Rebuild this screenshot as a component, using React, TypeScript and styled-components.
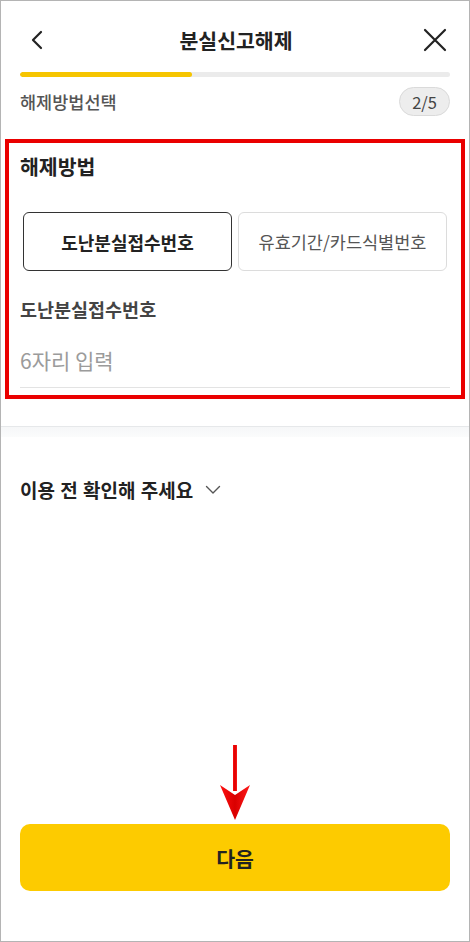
import styled, { createGlobalStyle } from "styled-components";

const GlobalStyle = createGlobalStyle`
    * { box-sizing: border-box; }
    body {
        margin: 0;
        background: #ffffff;
        font-family: "Noto Sans CJK KR", "Noto Sans", sans-serif;
        color: #222;
    }
`;

const Page = styled.div`
    width: 470px;
    height: 942px;
    border: 1px solid #b4b4b4;
    background: #fff;
    display: flex;
    flex-direction: column;
`;

const Header = styled.header`
    display: flex;
    align-items: center;
    justify-content: space-between;
    height: 56px;
    margin-top: 11px;
    padding: 0 22px 0 24px;
`;

const IconButton = styled.button`
    width: 24px;
    height: 24px;
    padding: 0;
    border: none;
    background: none;
    display: flex;
    align-items: center;
    justify-content: center;
`;

const Title = styled.h1`
    margin: 0;
    font-size: 20.5px;
    font-weight: 700;
    color: #222;
`;

const Progress = styled.div`
    margin: 4px 19px 0;
    height: 5px;
    border-radius: 3px;
    background: #ebebeb;
    overflow: hidden;
`;

const ProgressFill = styled.div`
    height: 100%;
    border-radius: 3px;
    background: #f6c500;
`;

const StepRow = styled.div`
    display: flex;
    align-items: center;
    justify-content: space-between;
    margin: 10px 19px 0;
`;

const StepName = styled.span`
    font-size: 17.5px;
    font-weight: 500;
    color: #555;
`;

const StepBadge = styled.span`
    height: 29px;
    padding: 0 12px;
    border-radius: 15px;
    border: 1px solid #dadada;
    background: #ededed;
    font-size: 16.5px;
    color: #444;
    display: flex;
    align-items: center;
`;

const Highlight = styled.section`
    margin: 23px 4px 0;
    border: 4px solid #ea0000;
    padding: 10px 11px 7px;
`;

const SectionTitle = styled.h2`
    margin: 0;
    font-size: 20.5px;
    line-height: 26px;
    font-weight: 700;
    color: #222;
`;

const OptionGrid = styled.div`
    display: grid;
    grid-template-columns: 1fr 1fr;
    gap: 6px;
    margin: 33px 3px 0;
`;

const Option = styled.button<{ $active?: boolean }>`
    height: 59px;
    border-radius: 6px;
    background: #fff;
    border: 1px solid ${p => (p.$active ? "#333" : "#dcdcdc")};
    font-family: inherit;
    font-size: ${p => (p.$active ? "18px" : "17.5px")};
    font-weight: ${p => (p.$active ? 700 : 400)};
    color: ${p => (p.$active ? "#222" : "#555")};
    padding: 0;
`;

const FieldLabel = styled.label`
    display: block;
    margin-top: 26px;
    font-size: 18.5px;
    line-height: 24px;
    font-weight: 700;
    color: #444;
`;

const FieldInput = styled.input`
    display: block;
    width: 100%;
    margin-top: 14px;
    padding: 12px 0 14px;
    border: none;
    border-bottom: 1px solid #e3e3e3;
    font-family: inherit;
    font-size: 21px;
    line-height: 26px;
    color: #222;
    outline: none;

    &::placeholder {
        color: #9b9b9b;
    }
`;

const Divider = styled.div`
    margin-top: 27px;
    height: 11px;
    border-top: 1px solid #e6e8ea;
    background: linear-gradient(#f6f7f8, #fbfcfc);
`;

const Notice = styled.div`
    display: flex;
    align-items: center;
    gap: 12px;
    margin: 41px 19px 0;
    font-size: 19px;
    line-height: 24px;
    font-weight: 700;
    color: #222;
    word-spacing: 1px;
`;

const Bottom = styled.div`
    margin-top: auto;
    padding: 0 19px 50px;
    display: flex;
    flex-direction: column;
    align-items: center;
`;

const Arrow = styled.svg`
    display: block;
    margin-bottom: 3px;
`;

const NextButton = styled.button`
    width: 100%;
    height: 67px;
    border: none;
    border-radius: 10px;
    background: #fdcb00;
    font-family: inherit;
    font-size: 20.5px;
    font-weight: 700;
    color: #222;
`;

function App() {
    const step = 2;
    const total = 5;

    return (
        <Page>
            <GlobalStyle />
            <Header>
                <IconButton aria-label="뒤로">
                    <svg width="14" height="20" viewBox="0 0 14 20" fill="none">
                        <path d="M11 2 L3 10 L11 18" stroke="#222" strokeWidth="2.2" strokeLinecap="round" strokeLinejoin="round" />
                    </svg>
                </IconButton>
                <Title>분실신고해제</Title>
                <IconButton aria-label="닫기">
                    <svg width="24" height="24" viewBox="0 0 24 24" fill="none">
                        <path d="M2 2 L22 22 M22 2 L2 22" stroke="#222" strokeWidth="2.2" strokeLinecap="round" />
                    </svg>
                </IconButton>
            </Header>
            <Progress>
                <ProgressFill style={{ width: `${(step / total) * 100}%` }} />
            </Progress>
            <StepRow>
                <StepName>해제방법선택</StepName>
                <StepBadge>{step}/{total}</StepBadge>
            </StepRow>

            <Highlight>
                <SectionTitle>해제방법</SectionTitle>
                <OptionGrid>
                    <Option $active>도난분실접수번호</Option>
                    <Option>유효기간/카드식별번호</Option>
                </OptionGrid>
                <FieldLabel htmlFor="receipt">도난분실접수번호</FieldLabel>
                <FieldInput id="receipt" placeholder="6자리 입력" />
            </Highlight>

            <Divider />

            <Notice>
                이용 전 확인해 주세요
                <svg width="16" height="10" viewBox="0 0 16 10" fill="none">
                    <path d="M1.5 1.5 L8 8 L14.5 1.5" stroke="#555" strokeWidth="1.4" strokeLinecap="round" strokeLinejoin="round" />
                </svg>
            </Notice>

            <Bottom>
                <Arrow width="34" height="76" viewBox="0 0 34 76">
                    <defs>
                        <linearGradient id="arrowRed" x1="0" x2="1" y1="0" y2="0">
                            <stop offset="0" stopColor="#ff1010" />
                            <stop offset="0.5" stopColor="#d90000" />
                            <stop offset="1" stopColor="#ff1a1a" />
                        </linearGradient>
                    </defs>
                    <rect x="15" y="0" width="4" height="46" fill="url(#arrowRed)" />
                    <path d="M2 40 L17 50 L32 40 L17 75 Z" fill="url(#arrowRed)" />
                </Arrow>
                <NextButton>다음</NextButton>
            </Bottom>
        </Page>
    );
}

export default App;
